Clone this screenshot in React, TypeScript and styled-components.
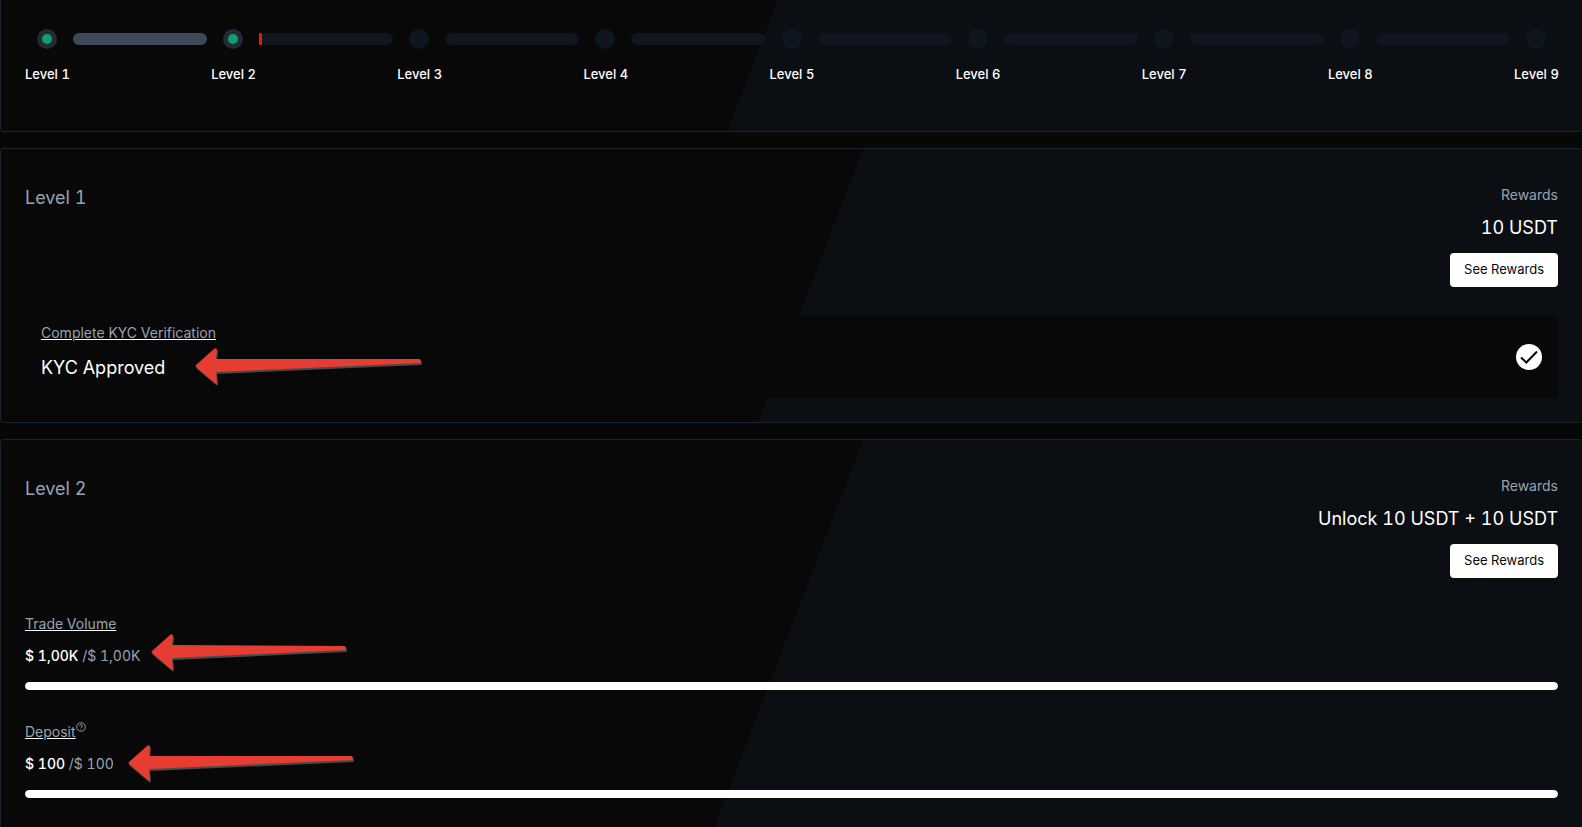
import React from "react";
import styled, { createGlobalStyle } from "styled-components";

const GlobalStyle = createGlobalStyle`
  *, *::before, *::after { box-sizing: border-box; }
  body {
    margin: 0;
    background: #070707;
    color: #ffffff;
    font-family: Inter, "Liberation Sans", sans-serif;
    font-size: 14px;
    font-variant-numeric: tabular-nums;
    line-height: 20px;
  }
  h2, p { margin: 0; font-weight: 400; }
`;

const Page = styled.main`
  display: flex;
  flex-direction: column;
  gap: 16px;
  min-height: 100vh;
`;

const Card = styled.section<{ $shift?: number; $open?: "top" | "bottom" }>`
  padding: 36px 24px 24px;
  border: 1px solid #1b232f;
  border-right: 0;
  border-radius: 4px;
  background: linear-gradient(111deg, #080808 calc(50% - 77px), #0b0e12 calc(50% - 76px))
    0 ${(p) => p.$shift ?? 0}px / 100% 800px no-repeat;
  ${(p) => p.$open === "top" && "padding: 29px 24px 47px; border-top: 0; border-radius: 0 0 4px 4px;"}
  ${(p) => p.$open === "bottom" && "flex: 1; border-bottom: 0; border-radius: 4px 4px 0 0;"}
`;

const Track = styled.div`
  display: flex;
  align-items: center;
  gap: 16px;
  padding: 0 12px;
`;

const Dot = styled.span<{ $done: boolean }>`
  display: flex;
  flex: none;
  align-items: center;
  justify-content: center;
  width: 20px;
  height: 20px;
  border-radius: 50%;
  background: ${(p) => (p.$done ? "#232b38" : "#0f1620")};
  &::after {
    content: "";
    width: 10px;
    height: 10px;
    border-radius: 50%;
    background: ${(p) => (p.$done ? "#0e9f6a" : "transparent")};
  }
`;

const Segment = styled.span`
  flex: 1;
  height: 12px;
  border-radius: 6px;
  background: #0f1620;
`;

const SegmentFill = styled.span<{ $full: boolean }>`
  display: block;
  height: 100%;
  border-radius: ${(p) => (p.$full ? 6 : 1)}px;
  background: ${(p) => (p.$full ? "#3d4859" : "#e51c00")};
`;

const Labels = styled.div`
  display: flex;
  justify-content: space-between;
  margin-top: 15px;
`;

const StepLabel = styled.span`
  width: 44px;
  font-size: 13px;
  font-weight: 500;
  text-align: center;
  white-space: nowrap;
`;

const Head = styled.header`
  display: flex;
  justify-content: space-between;
  align-items: flex-start;
`;

const Title = styled.h2`
  color: #9aa3b2;
  font-size: 18px;
  line-height: 26px;
`;

const Rewards = styled.div`
  display: flex;
  flex-direction: column;
  align-items: flex-end;
`;

const Caption = styled.p`
  color: #9aa3b2;
`;

const Amount = styled.p`
  margin: 9px 0 11px;
  font-size: 18px;
  line-height: 28px;
`;

const Button = styled.button`
  height: 34px;
  padding: 0 14px 2px;
  border: 0;
  border-radius: 4px;
  background: #ffffff;
  color: #080808;
  font: inherit;
  font-size: 13px;
  cursor: pointer;
`;

const Verification = styled.div`
  display: flex;
  align-items: center;
  justify-content: space-between;
  margin-top: 28px;
  padding: 0 16px;
  border-radius: 4px;
  background: #080808;
`;

const VerificationText = styled.div`
  display: flex;
  flex-direction: column;
  align-items: flex-start;
  gap: 11px;
  padding: 8px 0 16px;
`;

const TaskLink = styled.a`
  color: #9aa3b2;
  text-decoration: underline 1px #ffffff;
  text-underline-offset: 1px;
  text-decoration-skip-ink: auto;
`;

const Status = styled.p`
  position: relative;
  font-size: 18px;
  line-height: 28px;
`;

const Goals = styled.div`
  display: flex;
  flex-direction: column;
  gap: 32px;
  margin-top: 36px;
`;

const Goal = styled.div`
  display: flex;
  flex-direction: column;
  align-items: flex-start;
`;

const GoalName = styled.div`
  display: flex;
  align-items: flex-start;
`;

const GoalValue = styled.p`
  position: relative;
  margin: 12px 0 16px;
  color: #9aa3b2;
`;

const Current = styled.span`
  color: #ffffff;
  font-weight: 500;
`;

const Bar = styled.div`
  width: 100%;
  height: 8px;
  border-radius: 4px;
  background: #0f1620;
  overflow: hidden;
`;

const BarFill = styled.div`
  height: 100%;
  border-radius: 4px;
  background: #ffffff;
`;

const Pointer = styled.svg<{ $gap: number; $rise: number }>`
  position: absolute;
  left: calc(100% + ${(p) => p.$gap}px);
  bottom: calc(50% - ${(p) => 20 - p.$rise}px);
  pointer-events: none;
`;

function Arrow({ length, gap, rise, tail }: { length: number; gap: number; rise: number; tail: number }) {
  const d = `M1 18 Q0 19 1 20 L20 36 Q22 37 22 35 L21 25 L${length - 1} ${tail + 4} Q${length} ${tail + 4} ${length} ${tail + 2} Q${length} ${tail} ${length - 2} ${tail} L21 12 L22 3 Q22 0 19 2 Z`;
  return (
    <Pointer $gap={gap} $rise={rise} width={length + 4} height={40} viewBox={`0 0 ${length + 4} 40`} aria-hidden="true">
      <path d={d} fill="#4a4a4a" transform="translate(1 2)" />
      <path d={d} fill="#e63c31" />
    </Pointer>
  );
}

function CheckBadge() {
  return (
    <svg width="26" height="26" viewBox="0 0 26 26" role="img" aria-label="Completed">
      <circle cx="13" cy="13" r="13" fill="#ffffff" />
      <path d="M5 13.5 L10.3 18.5 L21 7.5" fill="none" stroke="#080808" strokeWidth="2" />
    </svg>
  );
}

function HelpIcon() {
  return (
    <svg width="10" height="10" viewBox="0 0 10 10" fill="none" stroke="#b4bac4" strokeWidth="0.8" role="img" aria-label="Help">
      <circle cx="5" cy="5" r="4.3" />
      <path d="M3.6 4 C3.6 2.1 6.4 2.1 6.4 3.9 C6.4 5 5 5 5 6.2 M5 7 V7.8" />
    </svg>
  );
}

const levels = [1, 2, 3, 4, 5, 6, 7, 8, 9];
const progress: Record<number, number> = { 1: 100, 2: 2 };

const goals = [
  { name: "Trade Volume", current: "$ 1,00K", target: "$ 1,00K", help: false, percent: 100, arrow: { length: 195, gap: 11, rise: 3, tail: 13 } },
  { name: "Deposit", current: "$ 100", target: "$ 100", help: true, percent: 100, arrow: { length: 225, gap: 14, rise: 0, tail: 12 } },
];

function RewardPanel({ amount }: { amount: string }) {
  return (
    <Rewards>
      <Caption>Rewards</Caption>
      <Amount>{amount}</Amount>
      <Button type="button">See Rewards</Button>
    </Rewards>
  );
}

export default function App() {
  return (
    <>
      <GlobalStyle />
      <Page>
        <Card $open="top" $shift={-222}>
          <Track>
            {levels.map((level) => (
              <React.Fragment key={level}>
                <Dot $done={level <= 2} />
                {level < levels.length && (
                  <Segment>
                    <SegmentFill $full={progress[level] === 100} style={{ width: `${progress[level] ?? 0}%` }} />
                  </Segment>
                )}
              </React.Fragment>
            ))}
          </Track>
          <Labels>
            {levels.map((level) => (
              <StepLabel key={level}>Level {level}</StepLabel>
            ))}
          </Labels>
        </Card>

        <Card>
          <Head>
            <Title>Level 1</Title>
            <RewardPanel amount="10 USDT" />
          </Head>
          <Verification>
            <VerificationText>
              <TaskLink href="#kyc">Complete KYC Verification</TaskLink>
              <Status>
                KYC Approved
                <Arrow length={226} gap={30} rise={1} tail={12} />
              </Status>
            </VerificationText>
            <CheckBadge />
          </Verification>
        </Card>

        <Card $open="bottom">
          <Head>
            <Title>Level 2</Title>
            <RewardPanel amount="Unlock 10 USDT + 10 USDT" />
          </Head>
          <Goals>
            {goals.map((goal) => (
              <Goal key={goal.name}>
                <GoalName>
                  <TaskLink href={`#${goal.name.toLowerCase().replace(" ", "-")}`}>{goal.name}</TaskLink>
                  {goal.help && <HelpIcon />}
                </GoalName>
                <GoalValue>
                  <Current>{goal.current}</Current> /{goal.target}
                  <Arrow {...goal.arrow} />
                </GoalValue>
                <Bar role="progressbar" aria-label={goal.name} aria-valuenow={goal.percent}>
                  <BarFill style={{ width: `${goal.percent}%` }} />
                </Bar>
              </Goal>
            ))}
          </Goals>
        </Card>
      </Page>
    </>
  );
}
